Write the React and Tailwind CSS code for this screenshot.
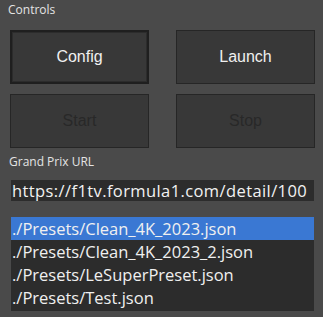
const presets = [
  './Presets/Clean_4K_2023.json',
  './Presets/Clean_4K_2023_2.json',
  './Presets/LeSuperPreset.json',
  './Presets/Test.json',
]

const CtrlButton = ({ label, disabled, focused }) => (
  <button
    disabled={disabled}
    className={`h-[54px] w-[139px] bg-[#383838] text-[16px] font-['Liberation_Sans',Arial,sans-serif] ${
      focused ? 'border-2 border-[#1f1f1f] shadow-[inset_0_0_0_1px_#2c2c2c]' : 'border border-[#262626]'
    } ${disabled ? 'text-[#282828]' : 'text-[#f0f0f0]'}`}
  >
    {label}
  </button>
)

export default function App() {
  return (
    <div className="h-[317px] w-[323px] overflow-hidden bg-[#4a4a4a] font-['Open_Sans','Noto_Sans',sans-serif]">
      <div className="px-2 pt-[1px] text-[12px] leading-[18px] text-[#e4e4e4]">Controls</div>
      <div className="ml-[10px] mt-[11px] grid w-[305px] grid-cols-[139px_139px] justify-between gap-y-[10px]">
        <CtrlButton label="Config" focused />
        <CtrlButton label="Launch" />
        <CtrlButton label="Start" disabled />
        <CtrlButton label="Stop" disabled />
      </div>
      <div className="ml-[9px] mt-[5px] text-[12px] leading-[18px] text-[#e4e4e4]">Grand Prix URL</div>
      <div className="ml-[11px] mt-[9px] h-[21px] w-[303px] overflow-hidden whitespace-nowrap bg-[#2c2c2c] pl-[1px] text-[16.5px] leading-[21px] tracking-[0.4px] text-[#f2f2f2]">
        https://f1tv.formula1.com/detail/100
      </div>
      <ul className="ml-[11px] mt-[16px] h-[94px] w-[303px] bg-[#2c2c2c] text-[16.5px] leading-[23px] text-[#f0f0f0]">
        {presets.map((p, i) => (
          <li
            key={i}
            className={`h-[23px] whitespace-nowrap pl-[1px] ${i === 0 ? 'bg-[#3a78d3]' : ''}`}
          >
            {p}
          </li>
        ))}
      </ul>
    </div>
  )
}
